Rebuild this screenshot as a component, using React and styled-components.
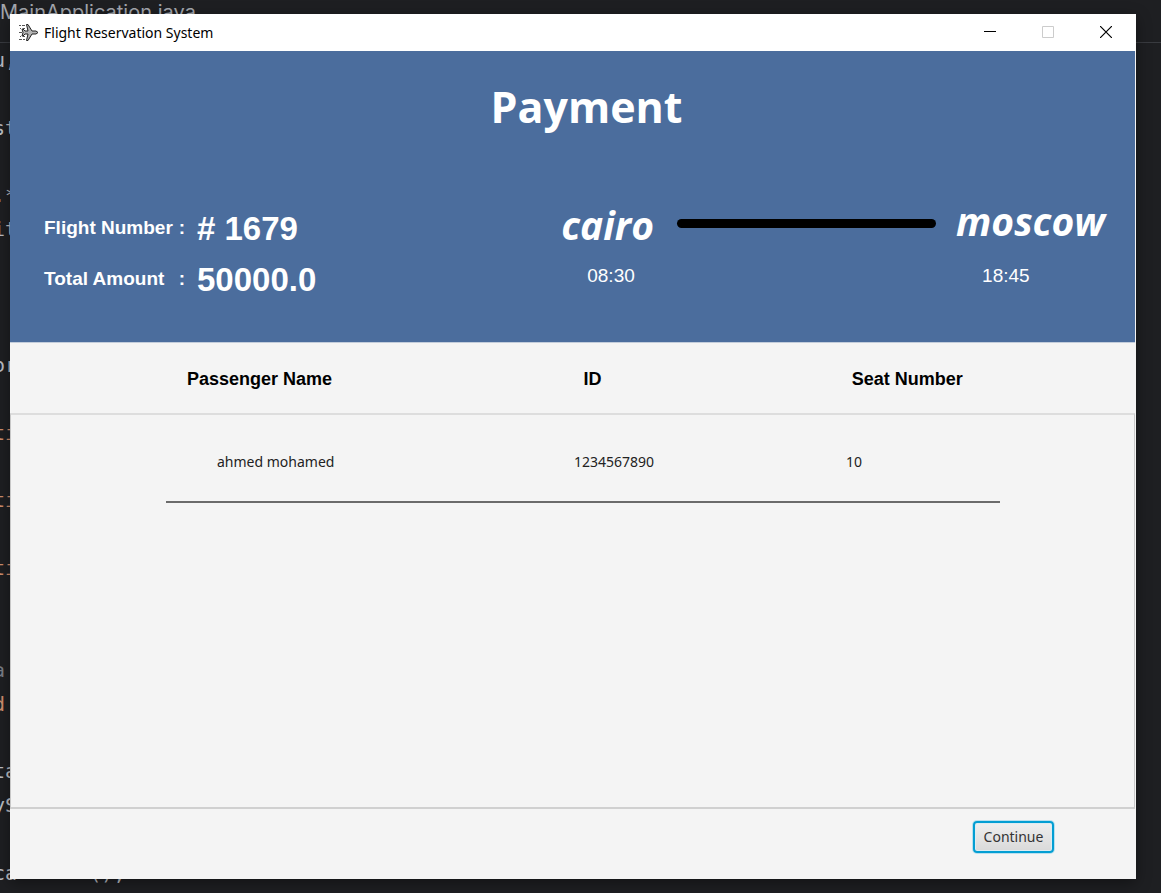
import React from "react";
import styled, { createGlobalStyle } from "styled-components";

const humanist = `"Open Sans", "Noto Sans", sans-serif`;
const grotesk = `"Liberation Sans", Arial, sans-serif`;
const system = `"Noto Sans", "Open Sans", sans-serif`;

const GlobalStyle = createGlobalStyle`
  * { box-sizing: border-box; }
  body { margin: 0; background: #1e1f22; font-family: ${system}; }
`;

const Desktop = styled.div`
  position: relative;
  min-height: 100vh;
  display: flex;
  padding: 14px 25px 14px 10px;
  overflow: hidden;
`;

const Editor = styled.div`
  position: absolute;
  inset: 0;
  display: flex;
  flex-direction: column;
  padding-bottom: 3px;
  color: #bcbec4;
  white-space: pre;
  overflow: hidden;
`;

const EditorTab = styled.div`
  height: 43px;
  border-bottom: 1px solid #393b40;
  font: 20px/24px Inter, sans-serif;
  color: #a4a7ae;
`;

const CodeLine = styled.div`
  flex: 1;
  display: flex;
  align-items: center;
  margin-left: -7px;
  font: 20px/24px "DejaVu Sans Mono", monospace;
  color: ${(p) => p.$color || "#bcbec4"};
`;

const Window = styled.main`
  position: relative;
  flex: 1;
  display: flex;
  flex-direction: column;
  background: #f4f4f4;
  box-shadow: 0 4px 14px rgba(0, 0, 0, 0.4);
`;

const TitleBar = styled.header`
  display: flex;
  align-items: center;
  height: 37px;
  padding: 0 1px 0 8px;
  background: #fff;
`;

const AppTitle = styled.span`
  flex: 1;
  margin-left: 5px;
  font-size: 14px;
  line-height: 20px;
  color: #000;
`;

const WindowButton = styled.button`
  display: flex;
  align-items: center;
  justify-content: center;
  width: 58px;
  height: 37px;
  padding: 0 0 2px;
  border: 0;
  background: none;
  color: ${(p) => (p.disabled ? "#cccccc" : "#000")};
`;

const Hero = styled.section`
  height: 292px;
  margin-right: 1px;
  padding: 24px 30px 0 34px;
  border-bottom: 1px solid #c3cddb;
  background: #4b6d9d;
  color: #fff;
`;

const PageTitle = styled.h1`
  margin: 0;
  padding-left: 24px;
  font: 700 43px/64px ${humanist};
  text-align: center;
`;

const HeroBody = styled.div`
  display: flex;
  justify-content: space-between;
  margin-top: 64px;
`;

const Facts = styled.dl`
  display: grid;
  grid-template-columns: 153px auto;
  grid-auto-rows: 51px;
  align-items: center;
  margin: 0;
`;

const FactLabel = styled.dt`
  display: flex;
  justify-content: space-between;
  padding: 0 12px 2px 0;
  font: 700 19px/24px ${grotesk};
`;

const FactValue = styled.dd`
  margin: 0;
  font: 700 33px/40px ${grotesk};
`;

const Route = styled.div`
  display: flex;
`;

const Stop = styled.div`
  display: flex;
  flex-direction: column;
  align-items: flex-start;
`;

const City = styled.span`
  height: 44px;
  font: italic 700 39px/${(p) => (p.$raised ? 36 : 44)}px ${humanist};
`;

const Time = styled.time`
  margin: 17px 0 0 26px;
  font: 19px/24px ${grotesk};
`;

const RouteLine = styled.div`
  width: 259px;
  height: 9px;
  margin: 16px 20px 0 23px;
  border-radius: 5px;
  background: #000;
`;

const Passengers = styled.table`
  display: flex;
  flex-direction: column;
  flex: 1;
`;

const TableHead = styled.thead`
  display: block;
  padding: 0 135px 0 156px;
`;

const TableBody = styled.tbody`
  display: block;
  flex: 1;
  margin-right: 1px;
  padding: 9px 134px 0 155px;
  border: 1px solid #c8c8c8;
  border-top: 2px solid #dddddd;
  border-bottom: 2px solid #d0d0d0;
`;

const Row = styled.tr`
  display: grid;
  grid-template-columns: 408fr 272fr 154fr;
  align-items: center;
  height: ${(p) => (p.$head ? "70px" : "79px")};
  border-bottom: ${(p) => (p.$head ? "0" : "2px solid #6b6b6b")};
`;

const HeadCell = styled.th`
  padding: 2px 0 0 ${(p) => p.$indent}px;
  font: 700 18px/24px ${grotesk};
  text-align: left;
  color: #000;
`;

const Cell = styled.td`
  padding: 0 0 2px ${(p) => p.$indent}px;
  font: 14px/20px ${system};
  color: #222;
`;

const Footer = styled.footer`
  display: flex;
  justify-content: flex-end;
  height: 70px;
  padding: 12px 82px 0 0;
`;

const ContinueButton = styled.button`
  width: 81px;
  height: 32px;
  padding: 0;
  border: 2px solid #039ed3;
  border-radius: 4px;
  background: linear-gradient(#efefef, #d9d9d9);
  box-shadow: 0 0 0 1px #b9e0ee, inset 0 0 0 1px #dcecf2;
  font: 14px/20px ${system};
  color: #333;
`;

const orange = "#cf8e6d";
const codeLines = [
  ["u,"], [""], ["st"], [""], [".*"], ["it"], [""], [""], [""], ["or"],
  [""], ["ti", orange], [""], ["ti", orange], [""], ["ti", orange], [""], [""],
  ["a", "#7a7e85"], ["d", orange], [""], ["ta"], ["yS"], [""], ["ca      ();"],
];

const passengers = [{ name: "ahmed mohamed", id: "1234567890", seat: "10" }];

function PlaneIcon() {
  return (
    <svg width="21" height="20" viewBox="0 0 21 20" fill="none" aria-hidden="true">
      <path
        d="M8.500 1.500h1.500l4 6.500H18l2 1.500-2 1.500h-4l-4 6.500H8.500l1.500-6.500H7l-2 2H4l1-3.500-1-3.500h1l2 2h3z"
        fill="#b4b4b4"
        stroke="#222"
      />
      <path d="M1 2.500h2m1 0h3M2 5.500h1m2 0h2M1 9.500h3M2 13.500h1m2 0h2M1 16.500h3m1 0h2" stroke="#555" />
    </svg>
  );
}

export default function App() {
  return (
    <Desktop>
      <GlobalStyle />
      <Editor aria-hidden="true">
        <EditorTab>MainApplication.java</EditorTab>
        {codeLines.map(([text, color], i) => (
          <CodeLine key={i} $color={color}>{text}</CodeLine>
        ))}
      </Editor>
      <Window>
        <TitleBar>
          <PlaneIcon />
          <AppTitle>Flight Reservation System</AppTitle>
          <WindowButton aria-label="Minimize">
            <svg width="12" height="12"><path d="M0 5.5h12" stroke="currentColor" /></svg>
          </WindowButton>
          <WindowButton aria-label="Maximize" disabled>
            <svg width="12" height="12"><path d="M.5 .5h11v11H.5z" fill="none" stroke="currentColor" /></svg>
          </WindowButton>
          <WindowButton aria-label="Close">
            <svg width="12" height="12"><path d="M0 0l12 12M12 0L0 12" stroke="currentColor" strokeWidth="1.2" /></svg>
          </WindowButton>
        </TitleBar>
        <Hero>
          <PageTitle>Payment</PageTitle>
          <HeroBody>
            <Facts>
              <FactLabel>Flight Number <span>:</span></FactLabel>
              <FactValue># 1679</FactValue>
              <FactLabel>Total Amount <span>:</span></FactLabel>
              <FactValue>50000.0</FactValue>
            </Facts>
            <Route>
              <Stop><City>cairo</City><Time>08:30</Time></Stop>
              <RouteLine />
              <Stop><City $raised>moscow</City><Time>18:45</Time></Stop>
            </Route>
          </HeroBody>
        </Hero>
        <Passengers>
          <TableHead>
            <Row $head>
              <HeadCell $indent={21}>Passenger Name</HeadCell>
              <HeadCell $indent={9}>ID</HeadCell>
              <HeadCell $indent={5}>Seat Number</HeadCell>
            </Row>
          </TableHead>
          <TableBody>
            {passengers.map((p) => (
              <Row key={p.id}>
                <Cell $indent={51}>{p.name}</Cell>
                <Cell $indent={0}>{p.id}</Cell>
                <Cell $indent={0}>{p.seat}</Cell>
              </Row>
            ))}
          </TableBody>
        </Passengers>
        <Footer>
          <ContinueButton>Continue</ContinueButton>
        </Footer>
      </Window>
    </Desktop>
  );
}
